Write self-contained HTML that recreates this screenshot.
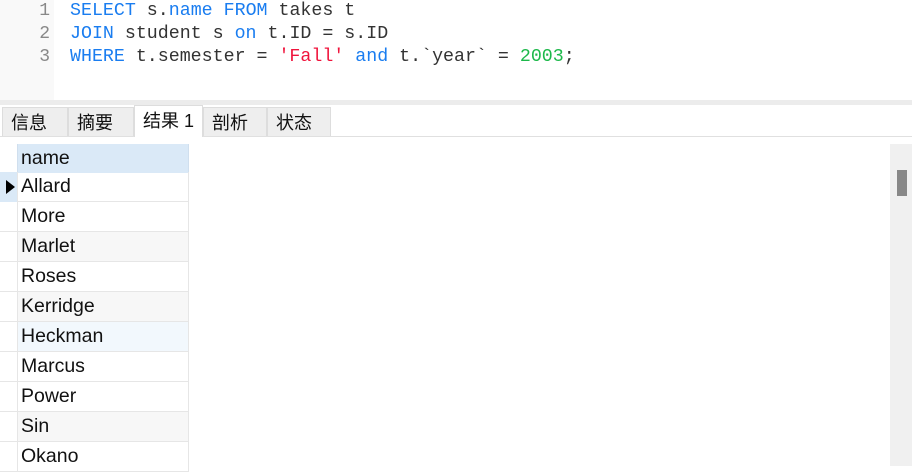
<!DOCTYPE html>
<html><head><meta charset="utf-8"><style>
*{margin:0;padding:0;box-sizing:border-box}
body{width:912px;height:466px;overflow:hidden;background:#fff;position:relative;font-family:"Liberation Sans","Noto Sans CJK SC",sans-serif}
.gut{position:absolute;left:0;top:0;width:54px;height:100px;background:#f9f9f9}
.ln{position:absolute;left:28px;width:22px;text-align:right;color:#888;font:18px "Liberation Mono",monospace}
.code{position:absolute;left:70px;font:18.3px "Liberation Mono",monospace;color:#333;white-space:pre}
.k{color:#1a7df0}.s{color:#f0143c}.n{color:#1cb84a}
.band{position:absolute;left:0;top:100px;width:912px;height:5px;background:#ececec}
.tabs{position:absolute;top:107px;left:0;height:30px;width:912px;border-bottom:1px solid #e0e0e0}
.tab{position:absolute;top:0;height:29px;background:#eee;border:1px solid #ddd;border-bottom:none;font-size:18px;padding:1px 0 0 8px;color:#111}
.tab.a{background:#fff;top:-2px;height:32px;padding-top:1px}
.row{position:absolute;left:0;width:189px;height:30px;border-bottom:1px solid #e6e6e6}
.row .c{position:absolute;left:17px;top:0;width:172px;height:29px;border-left:1px solid #e6e6e6;border-right:1px solid #e6e6e6;font-size:19.5px;padding:3px 0 0 3px;color:#111}
.sb{position:absolute;left:890px;top:144px;width:22px;height:322px;background:#f0f0f0}
.th{position:absolute;left:897px;top:170px;width:10px;height:26px;background:#888}
</style></head><body>
<div class="gut"></div>
<div class="ln" style="top:1px">1</div><div class="ln" style="top:24px">2</div><div class="ln" style="top:47px">3</div>
<div class="code" style="top:1px"><span class="k">SELECT</span> s.<span class="k">name</span> <span class="k">FROM</span> takes t</div>
<div class="code" style="top:24px"><span class="k">JOIN</span> student s <span class="k">on</span> t.ID = s.ID</div>
<div class="code" style="top:47px"><span class="k">WHERE</span> t.semester = <span class="s">'Fall'</span> <span class="k">and</span> t.`year` = <span class="n">2003</span>;</div>
<div class="band"></div>
<div class="tabs">
<div class="tab" style="left:2px;width:66px">信息</div>
<div class="tab" style="left:68px;width:66px">摘要</div>
<div class="tab" style="left:203px;width:64px">剖析</div>
<div class="tab" style="left:267px;width:64px">状态</div>
<div class="tab a" style="left:134px;width:69px">结果 1</div>
</div>
<div class="row" style="top:144px;height:29px;border:none"><div class="c" style="background:#dae9f7;border-color:#d0dfee">name</div></div>
<div class="row" style="top:172px"><div style="position:absolute;left:0;top:0;width:17px;height:30px;background:#dae9f7"></div><div style="position:absolute;left:6px;top:8px;border-left:9px solid #000;border-top:7px solid transparent;border-bottom:7px solid transparent"></div><div class="c">Allard</div></div>
<div class="row" style="top:202px"><div class="c">More</div></div>
<div class="row" style="top:232px"><div class="c" style="background:#f7f7f7">Marlet</div></div>
<div class="row" style="top:262px"><div class="c">Roses</div></div>
<div class="row" style="top:292px"><div class="c" style="background:#f7f7f7">Kerridge</div></div>
<div class="row" style="top:322px"><div class="c" style="background:#f2f8fd">Heckman</div></div>
<div class="row" style="top:352px"><div class="c">Marcus</div></div>
<div class="row" style="top:382px"><div class="c">Power</div></div>
<div class="row" style="top:412px"><div class="c" style="background:#f7f7f7">Sin</div></div>
<div class="row" style="top:442px"><div class="c">Okano</div></div>
<div class="sb"></div><div class="th"></div>
</body></html>
